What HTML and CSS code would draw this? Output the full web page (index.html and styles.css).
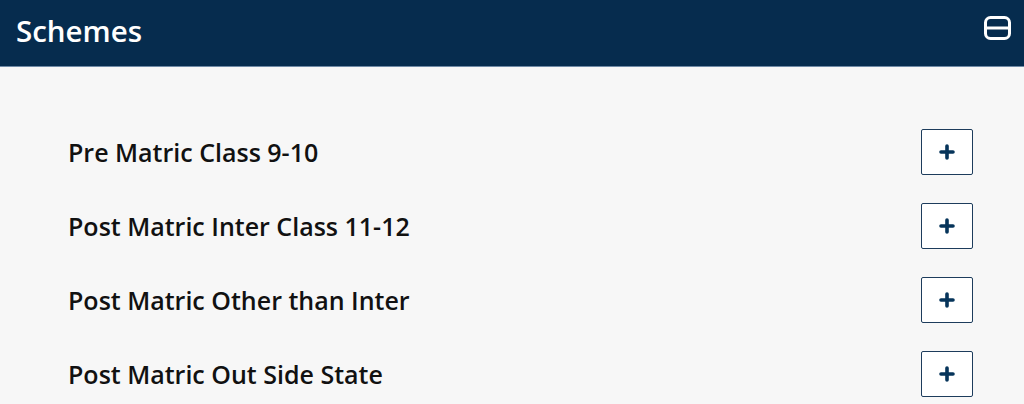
FILE: index.html
```html
<!DOCTYPE html>
<html lang="en">
<head>
<meta charset="UTF-8">
<meta name="viewport" content="width=device-width, initial-scale=1.0">
<title>Schemes</title>
<link rel="stylesheet" href="styles.css">
</head>
<body>
<div class="panel">
  <div class="panel-head">
    <h2>Schemes</h2>
    <button class="collapse" aria-label="Collapse">
      <svg width="27" height="24" viewBox="0 0 27 24"><rect x="1.5" y="1.5" width="24" height="21" rx="5" fill="none" stroke="#fff" stroke-width="3"/><rect x="3" y="10.5" width="21" height="3" fill="#fff"/></svg>
    </button>
  </div>
  <ul class="schemes">
    <li><span>Pre Matric Class 9-10</span><button class="toggle" aria-label="Expand"><svg width="16" height="16" viewBox="0 0 16 16"><path d="M8 2v12M2 8h12" stroke="#06345a" stroke-width="3.6" stroke-linecap="round"/></svg></button></li>
    <li><span>Post Matric Inter Class 11-12</span><button class="toggle" aria-label="Expand"><svg width="16" height="16" viewBox="0 0 16 16"><path d="M8 2v12M2 8h12" stroke="#06345a" stroke-width="3.6" stroke-linecap="round"/></svg></button></li>
    <li><span>Post Matric Other than Inter</span><button class="toggle" aria-label="Expand"><svg width="16" height="16" viewBox="0 0 16 16"><path d="M8 2v12M2 8h12" stroke="#06345a" stroke-width="3.6" stroke-linecap="round"/></svg></button></li>
    <li><span>Post Matric Out Side State</span><button class="toggle" aria-label="Expand"><svg width="16" height="16" viewBox="0 0 16 16"><path d="M8 2v12M2 8h12" stroke="#06345a" stroke-width="3.6" stroke-linecap="round"/></svg></button></li>
  </ul>
</div>
</body>
</html>
```
FILE: styles.css
```css
body {
  margin: 0;
  padding: 0;
  font-family: "Open Sans", Arial, sans-serif;
  background-color: #f7f7f7;
}

.panel-head {
  height: 66px;
  background-color: #062c4e;
  border-bottom: 1px solid #6f8aa6;
  display: flex;
  align-items: center;
  justify-content: space-between;
  padding: 0 13px 0 16px;
}

.panel-head h2 {
  margin: 0;
  color: #ffffff;
  font-size: 29.5px;
  font-weight: 600;
  margin-top: -6px;
}

.collapse {
  background: none;
  border: none;
  padding: 0;
  display: flex;
  margin-top: -10px;
}

.schemes {
  list-style: none;
  margin: 0;
  padding: 62px 51px 0 68px;
  display: flex;
  flex-direction: column;
  gap: 28px;
}

.schemes li {
  display: flex;
  align-items: center;
  justify-content: space-between;
  height: 46px;
}

.schemes span {
  font-size: 25px;
  font-weight: 600;
  color: #111111;
}

.toggle {
  width: 52px;
  height: 46px;
  border: 1.5px solid #1d3c5c;
  border-radius: 2px;
  background: #ffffff;
  display: flex;
  align-items: center;
  justify-content: center;
  padding: 0;
}
```
